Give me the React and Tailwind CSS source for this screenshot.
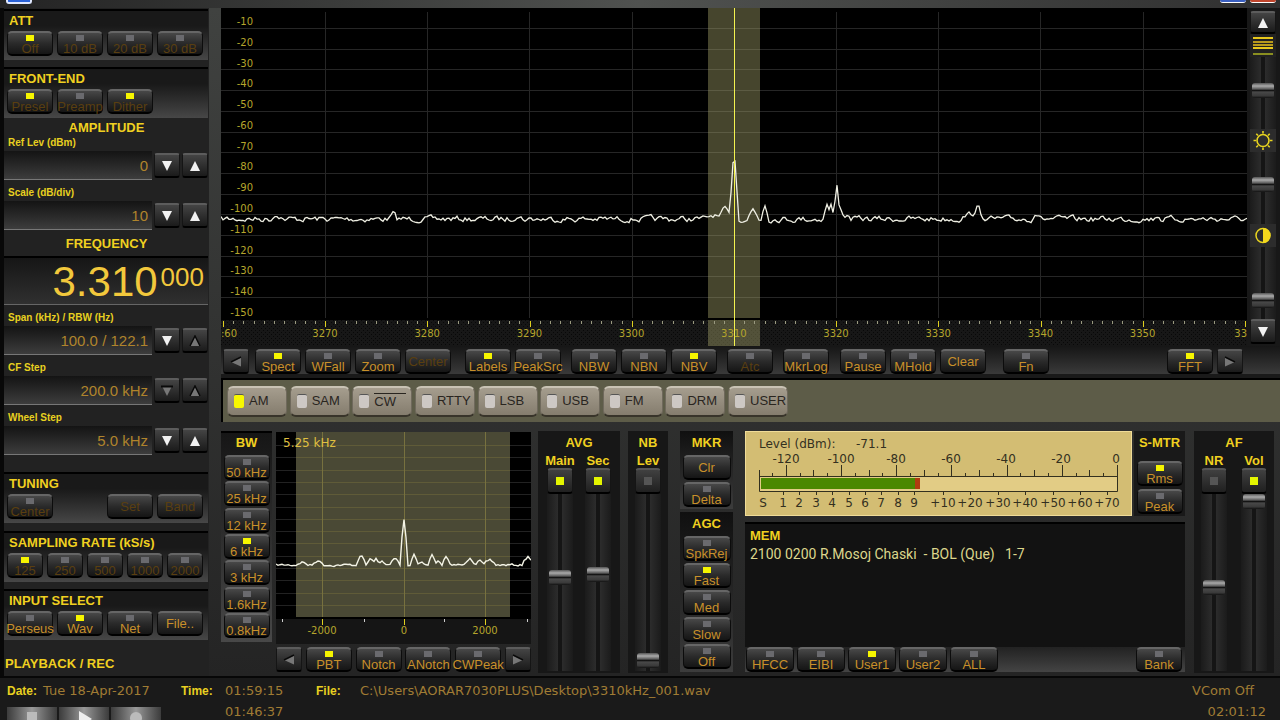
import React, { useState } from 'react';

const AXIS = [3270, 3280, 3290, 3300, 3310, 3320, 3330, 3340, 3350];
const LEVELS = [-10, -20, -30, -40, -50, -60, -70, -80, -90, -100, -110, -120, -130, -140, -150];
const MODES = ['AM', 'SAM', 'CW', 'RTTY', 'LSB', 'USB', 'FM', 'DRM', 'USER'];
const BANDWIDTHS = ['50 kHz', '25 kHz', '12 kHz', '6 kHz', '3 kHz', '1.6kHz', '0.8kHz'];

// [x, height above the noise floor, half width]
const MAIN_PEAKS = [
    [56, 5, 6], [172, 5, 4], [296, 4, 5], [492, 4, 8], [504, 10, 5], [512, 58, 3], [514, 60, 3],
    [532, 10, 5], [544, 15, 4], [606, 15, 4], [610, 13, 3], [616, 35, 3], [618, 14, 5], [624, 4, 5], [752, 6, 14],
    [757, 13, 4], [815, 7, 4], [936, 4, 4],
];
const SUB_PEAKS = [
    [26, 3, 6], [42, 5, 5], [85, 10, 5], [95, 7, 4], [100, 6, 3], [106, 5, 3], [119, 7, 5], [128, 46, 4],
    [138, 11, 4], [145, 4, 4], [156, 10, 4], [162, 5, 3], [170, 8, 4], [194, 8, 5], [203, 5, 4],
    [214, 5, 6], [252, 9, 6],
];

const makeTrace = (width, base, noise, step, peaks) => {
    let seed = 7;
    let drift = 0;
    let points = '';
    for (let x = 0; x <= width; x += step) {
        seed = (seed * 16807) % 2147483647;
        drift = drift * 0.5 + (seed / 2147483647 - 0.5) * noise;
        let lift = 0;
        peaks.forEach(([px, h, w]) => {
            const d = Math.abs(x - px);
            if (d < w) lift = Math.max(lift, h * (1 - (d / w) * 0.8));
        });
        points += `${x},${(base + drift - lift).toFixed(1)} `;
    }
    return points;
};

const Led = ({ on }) => (
    <span className={`block w-2 h-[6px] shrink-0 ${on ? 'bg-[#f6f500]' : 'bg-[#6a6a6e]'}`}></span>
);

const Key = ({ label, on, led = true, dim, width = 'w-[46px]', onClick }) => (
    <button
        type="button"
        onClick={onClick}
        className={`${width} h-[25px] shrink-0 flex flex-col items-center rounded-[5px] border-t-2 border-t-[#666] border-x border-x-[#0c0c0c] border-b-2 border-b-black bg-linear-to-b from-[#484848] via-[#2a2a2a] to-[#151515] text-[13px] leading-[14px] whitespace-nowrap ${led ? 'pt-[2px]' : 'justify-center'} ${dim ? 'text-[#5a3f10]' : 'text-[#c8902a]'}`}
    >
        {led && <Led on={on} />}
        <span className={led ? 'mt-px' : ''}>{label}</span>
    </button>
);

const Arrow = ({ dir, dim, label, size = 'w-[26px] h-[25px]' }) => (
    <button
        type="button"
        aria-label={label}
        className={`${size} shrink-0 flex items-center justify-center rounded-[3px] border-t-2 border-t-[#5c5c5c] border-x border-x-[#151515] border-b-2 border-b-black bg-linear-to-b from-[#444] to-[#1b1b1b]`}
    >
        <svg width="12" height="12" viewBox="0 0 12 12" fill={dim ? '#777' : '#f2f2f2'}>
            {dir === 'up' && <path d="M6 1 L11 11 H1 Z" />}
            {dir === 'down' && <path d="M1 1 H11 L6 11 Z" />}
            {dir === 'left' && <path d="M11 1.500 V10.500 L1 6 Z" />}
            {dir === 'right' && <path d="M1 1.500 V10.500 L11 6 Z" />}
            {dim && dir === 'up' && <path d="M1 11 L6 1 L11 11" fill="none" stroke="#0a0a0a" strokeWidth="1.500" />}
            {dim && dir === 'down' && <path d="M0 1.500 H12" fill="none" stroke="#0a0a0a" strokeWidth="2" />}
            {dim && dir === 'left' && <path d="M11 1 L1 6" fill="none" stroke="#0a0a0a" strokeWidth="1.500" />}
            {dim && dir === 'right' && <path d="M1 1 L11 6" fill="none" stroke="#0a0a0a" strokeWidth="1.500" />}
        </svg>
    </button>
);

const Slider = ({ label, value, height }) => (
    <input
        type="range"
        aria-label={label}
        defaultValue={value}
        className={`${height} w-[26px] m-0 shrink-0 appearance-none [writing-mode:vertical-lr] [direction:rtl] bg-[linear-gradient(90deg,#1b1b1b,#2c2c2c_42%,#151515_44%,#151515_56%,#2c2c2c_58%,#1b1b1b)] [&::-webkit-slider-thumb]:appearance-none [&::-webkit-slider-thumb]:w-[22px] [&::-webkit-slider-thumb]:h-[15px] [&::-webkit-slider-thumb]:rounded-[3px] [&::-webkit-slider-thumb]:bg-[linear-gradient(#555,#aaa_20%,#555_42%,#0a0a0a_48%,#484848_60%,#3a3a3a_85%,#111)]`}
    />
);

const Square = ({ on, label }) => (
    <button
        type="button"
        aria-label={label}
        className="w-[26px] h-[26px] shrink-0 flex items-center justify-center rounded-[4px] border-t-2 border-t-[#555] border-x border-x-[#151515] border-b-2 border-b-black bg-linear-to-b from-[#404040] to-[#202020]"
    >
        <span className={`block w-2 h-2 ${on ? 'bg-[#e4f500]' : 'bg-[#555]'}`}></span>
    </button>
);

const Heading = ({ children, className = '' }) => (
    <h2 className={`text-[13px] leading-4 font-bold text-[#f0d020] whitespace-nowrap ${className}`}>{children}</h2>
);

const Group = ({ title, children, className = '' }) => (
    <section className={`h-[51px] w-[204px] shrink-0 border-t-2 border-black bg-linear-to-b from-[#191919] from-30% to-[#474747] px-[3px] pt-[2px] ${className}`}>
        <Heading className="pl-[2px]">{title}</Heading>
        <div className="mt-[2px] flex gap-1">{children}</div>
    </section>
);

const Field = ({ id, label, value, dimDown, dimUp }) => (
    <div className="h-[50px] shrink-0">
        <label htmlFor={id} className="block pl-1 h-[14px] text-[10px] leading-[14px] font-bold text-[#e8d020]">{label}</label>
        <div className="mt-px flex items-center gap-[2px]">
            <input
                id={id}
                readOnly
                value={value}
                className="w-[148px] h-[29px] pr-1 text-right text-[15px] text-[#b0842c] border-b border-[#777] bg-linear-to-b from-[#141414] to-[#3d3d3d] outline-none"
            />
            <Arrow dir="down" dim={dimDown} label={`${label} down`} />
            <Arrow dir="up" dim={dimUp} label={`${label} up`} />
        </div>
    </div>
);

const Sidebar = () => (
    <aside className="w-[209px] shrink-0 flex flex-col border-l-4 border-[#080808] bg-[#222]">
        <Group title="ATT" className="mt-px">
            <Key label="Off" on dim />
            <Key label="10 dB" dim />
            <Key label="20 dB" dim />
            <Key label="30 dB" dim />
        </Group>
        <Group title="FRONT-END" className="mt-[7px]">
            <Key label="Presel" on dim />
            <Key label="Preamp" dim />
            <Key label="Dither" on dim />
        </Group>
        <Heading className="mt-[2px] text-center">AMPLITUDE</Heading>
        <Field id="ref" label="Ref Lev (dBm)" value="0" />
        <Field id="scale" label="Scale (dB/div)" value="10" />
        <Heading className="text-center">FREQUENCY</Heading>
        <div className="mt-1 mb-[6px] h-[49px] w-[204px] shrink-0 pr-1 flex items-start justify-end gap-[3px] border-t-2 border-black border-b border-b-[#666] bg-linear-to-b from-[#161616] to-[#303030] text-[#f2c83c]">
            <span className="pt-[2px] text-[42px] leading-[44px]">3.310</span>
            <span className="pt-1 text-[26px] leading-[30px]">000</span>
        </div>
        <Field id="span" label="Span (kHz) / RBW (Hz)" value="100.0 / 122.1" dimUp />
        <Field id="cf" label="CF Step" value="200.0 kHz" dimDown dimUp />
        <Field id="wheel" label="Wheel Step" value="5.0 kHz" />
        <Group title="TUNING" className="mt-[11px]">
            <Key label="Center" dim />
            <span className="w-[46px]"></span>
            <Key label="Set" led={false} dim />
            <Key label="Band" led={false} dim />
        </Group>
        <Group title="SAMPLING RATE (kS/s)" className="mt-2">
            <Key label="125" on dim width="w-9" />
            <Key label="250" dim width="w-9" />
            <Key label="500" dim width="w-9" />
            <Key label="1000" dim width="w-9" />
            <Key label="2000" dim width="w-9" />
        </Group>
        <Group title="INPUT SELECT" className="mt-[7px]">
            <Key label="Perseus" />
            <Key label="Wav" on />
            <Key label="Net" />
            <Key label="File.." led={false} />
        </Group>
        <Heading className="mt-4 pl-px">PLAYBACK / REC</Heading>
    </aside>
);

const Spectrum = () => (
    <div className="relative flex-1 min-w-0 h-[338px] overflow-hidden bg-black text-[10px] leading-3 text-[#b5a52c] font-['DejaVu_Sans',Verdana,sans-serif]">
        <svg className="block w-full h-full" viewBox="0 0 1026 338" preserveAspectRatio="none">
            <defs>
                <pattern id="dots" width="4" height="4" patternUnits="userSpaceOnUse">
                    <rect width="4" height="4" fill="#171717" />
                    <rect width="1" height="1" fill="#080808" />
                    <rect x="2" y="2" width="1" height="1" fill="#080808" />
                </pattern>
            </defs>
            <g stroke="#262626" strokeWidth="1">
                {LEVELS.map((l, i) => (
                    <line key={l} x1="0" x2="1026" y1={Math.round(20 + i * 20.7) + 0.5} y2={Math.round(20 + i * 20.7) + 0.5} />
                ))}
                {AXIS.map((f, i) => (
                    <line key={f} y1="4" y2="310" x1={Math.round(104 + i * 102.2) + 0.5} x2={Math.round(104 + i * 102.2) + 0.5} />
                ))}
            </g>
            <rect y="312" width="1026" height="26" fill="url(#dots)" />
            <rect x="487" width="52" height="338" fill="#a8a46c" opacity="0.42" />
            <rect y="310" width="1026" height="2" fill="#000" />
            {Array.from({ length: 101 }).map((_, i) => (
                <rect
                    key={i}
                    x={Math.round(2 + i * 10.22)}
                    y="313"
                    width="1"
                    height={i % 10 === 0 ? 6 : 3}
                    fill={i % 10 === 0 ? '#e0d020' : '#9a9a80'}
                />
            ))}
            <polyline points={makeTrace(1026, 211, 5, 2, MAIN_PEAKS)} fill="none" stroke="#f0f0e4" strokeWidth="1.300" />
            <rect x="513" width="1" height="338" fill="#f4f250" />
        </svg>
        <div className="absolute left-0 top-[8px] w-8 h-[303px] flex flex-col justify-between text-right">
            {LEVELS.map((l) => <span key={l}>{l}</span>)}
        </div>
        <span className="absolute left-0 top-[320px]">:60</span>
        {AXIS.map((f, i) => (
            <span key={f} className="absolute top-[320px] w-10 -ml-5 text-center" style={{ left: `${((104 + i * 102.2) / 1026) * 100}%` }}>{f}</span>
        ))}
        <span className="absolute right-0 top-[320px]">33</span>
    </div>
);

const DisplayStrip = () => (
    <div className="w-[33px] pt-[3px] pl-[3px] shrink-0 flex flex-col bg-[#181818]">
        <Arrow dir="up" label="Scroll up" size="w-[26px] h-[23px]" />
        <svg width="26" height="23" viewBox="0 0 26 23" fill="#e8c81c">
            <rect width="26" height="23" fill="#222" />
            <rect x="3" y="3" width="20" height="2" />
            <rect x="3" y="7" width="20" height="2" fill="#b89a1c" />
            <rect x="3" y="10" width="20" height="2" fill="#b89a1c" />
            <rect x="3" y="13" width="20" height="2" />
            <rect x="3" y="19" width="20" height="2" fill="#8a8f20" />
        </svg>
        <Slider label="Line spacing" value={54} height="h-[72px]" />
        <svg width="26" height="23" viewBox="0 0 26 23" fill="none" stroke="#e8d420" strokeWidth="1.600">
            <rect width="26" height="23" fill="#2c2c2c" stroke="none" />
            <circle cx="13" cy="11.500" r="6" />
            <path d="M13 2V4.500M13 18.500V21M3.500 11.500H6M20 11.500H22.500M6.300 4.800L8 6.500M18 16.500L19.700 18.200M6.300 18.200L8 16.500M18 6.500L19.700 4.800" />
        </svg>
        <Slider label="Brightness" value={57} height="h-[72px]" />
        <svg width="26" height="23" viewBox="0 0 26 23">
            <rect width="26" height="23" fill="#2c2c2c" />
            <circle cx="13" cy="11.500" r="7" fill="none" stroke="#e8d420" strokeWidth="1.500" />
            <path d="M13 4A7.500 7.500 0 0 1 13 19Z" fill="#f4d81c" />
        </svg>
        <Slider label="Contrast" value={20} height="h-[72px]" />
        <Arrow dir="down" label="Scroll down" />
    </div>
);

const Toolbar = () => (
    <div className="h-8 pt-[3px] pl-[2px] pr-[37px] flex items-start bg-linear-to-b from-[#161616] to-[#3a3a3a] border-b-4 border-[#1a1a1a]">
        <Arrow dir="left" dim label="Previous" />
        <div className="ml-[6px] flex gap-1">
            <Key label="Spect" on />
            <Key label="WFall" />
            <Key label="Zoom" />
            <Key label="Center" led={false} dim />
        </div>
        <div className="ml-[14px] flex gap-1">
            <Key label="Labels" on />
            <Key label="PeakSrc" />
        </div>
        <div className="ml-[10px] flex gap-1">
            <Key label="NBW" />
            <Key label="NBN" />
            <Key label="NBV" on />
        </div>
        <div className="ml-[10px] flex gap-[10px]">
            <Key label="Atc" dim />
            <Key label="MkrLog" />
        </div>
        <div className="ml-[11px] flex gap-1">
            <Key label="Pause" />
            <Key label="MHold" />
            <Key label="Clear" led={false} />
        </div>
        <div className="ml-[17px]">
            <Key label="Fn" />
        </div>
        <div className="ml-auto flex gap-1">
            <Key label="FFT" on />
            <Arrow dir="right" dim label="Next" />
        </div>
    </div>
);

const ModeBar = () => {
    const [mode, setMode] = useState('AM');

    return (
        <div className="h-[44px] pl-1 flex items-center border-t-2 border-l-2 border-black bg-[#5d5c48]">
            <div className="w-[561px] flex justify-between">
                {MODES.map((m) => (
                    <button
                        key={m}
                        type="button"
                        onClick={() => setMode(m)}
                        className="w-[60px] h-[31px] pl-[6px] flex items-center gap-[5px] rounded-[6px] border-t-2 border-t-[#c8c2b4] border-x border-x-[#6f695c] border-b-2 border-b-[#38342a] bg-linear-to-b from-[#a59d8e] to-[#857d6e] text-[13px] text-[#29251f]"
                    >
                        <span className={`w-[10px] h-[14px] shrink-0 rounded-[2px] border-t border-[#555] ${m === mode ? 'bg-[#f8f800]' : 'bg-[#cdc8c4]'}`}></span>
                        <span className={m === 'CW' ? 'w-8 border-t border-[#29251f] text-left leading-4' : 'leading-4'}>{m}</span>
                    </button>
                ))}
            </div>
        </div>
    );
};

const Passband = () => (
    <div className="w-[255px] shrink-0 flex flex-col">
        <div className="relative h-[212px] bg-[#151515] font-['DejaVu_Sans',Verdana,sans-serif] text-[10px] leading-3 text-[#b5a52c]">
            <svg width="255" height="212" viewBox="0 0 255 212" className="block">
                <rect width="255" height="185" fill="#000" />
                <rect x="20" width="214" height="185" fill="#4a4935" />
                {Array.from({ length: 14 }).map((_, i) => (
                    <g key={i}>
                        <rect y={Math.round(13 + i * 12.3)} width="255" height="1" fill="#222" />
                        <rect x="20" y={Math.round(13 + i * 12.3)} width="214" height="1" fill="#5f5b38" />
                    </g>
                ))}
                {[46, 128, 209].map((x) => (
                    <g key={x}>
                        <rect x={x} width="1" height="185" fill="#77713f" />
                        <rect x={x} y="187" width="1" height="6" fill="#e0d020" />
                    </g>
                ))}
                {[6, 88, 168, 251].map((x) => <rect key={x} x={x} y="187" width="1" height="3" fill="#ccc" />)}
                <rect y="185" width="255" height="2" fill="#000" />
                <polyline points={makeTrace(256, 133, 2, 2, SUB_PEAKS)} fill="none" stroke="#f4f4e6" strokeWidth="1.400" />
            </svg>
            <span className="absolute left-[7px] top-[3px] text-[12px] leading-4 text-[#e0c040]">5.25 kHz</span>
            <span className="absolute left-[26px] w-10 top-[193px] text-center">-2000</span>
            <span className="absolute left-[108px] w-10 top-[193px] text-center">0</span>
            <span className="absolute left-[189px] w-10 top-[193px] text-center">2000</span>
        </div>
        <div className="mt-[3px] flex justify-between">
            <Arrow dir="left" label="Previous filter" dim />
            <Key label="PBT" on />
            <Key label="Notch" />
            <Key label="ANotch" />
            <Key label="CWPeak" />
            <Arrow dir="right" label="Next filter" dim />
        </div>
    </div>
);

const Channel = ({ name, on, value }) => (
    <div className="w-[26px] flex flex-col items-center">
        <Heading>{name}</Heading>
        <div className="-mt-px">
            <Square on={on} label={name} />
        </div>
        <Slider label={`${name} level`} value={value} height="h-[177px]" />
    </div>
);

const Meter = () => (
    <div className="flex-1 h-[85px] bg-[#d3bd73] border border-[#f0dc98]">
        <svg width="385" height="83" viewBox="746 432 385 83" fontSize="12" fill="#33301f" fontFamily="'DejaVu Sans', Verdana, sans-serif">
            <text x="759" y="448">Level (dBm):</text>
            <text x="856" y="448">-71.1</text>
            {[-120, -100, -80, -60, -40, -20, 0].map((v, i) => (
                <text key={v} x={786 + i * 55} y="463" textAnchor="middle">{v}</text>
            ))}
            <rect x="759" y="476" width="358" height="15" fill="#e2cc85" />
            <rect x="761" y="478" width="154" height="11" fill="#4a8800" />
            <rect x="915" y="478" width="5" height="11" fill="#b03c10" />
            <path d="M759.500 470V491.500H1117.500V465M759.500 476.500H1117.500" fill="none" stroke="#33301f" />
            {Array.from({ length: 25 }).map((_, i) => (
                <rect
                    key={i}
                    x={Math.round(772 + i * 13.8)}
                    y={i % 4 === 1 ? 465 : i % 4 === 3 ? 470 : 473}
                    width="1"
                    height={i % 4 === 1 ? 11 : i % 4 === 3 ? 6 : 3}
                />
            ))}
            <text x="763" y="507" textAnchor="middle">S</text>
            {[1, 2, 3, 4, 5, 6, 7, 8, 9].map((n, i) => (
                <g key={n}>
                    <text x={Math.round(783 + i * 16.4)} y="507" textAnchor="middle">{n}</text>
                    <rect x={Math.round(783 + i * 16.4)} y="492" width="1" height="3" />
                </g>
            ))}
            {[10, 20, 30, 40, 50, 60, 70].map((n, i) => (
                <g key={n}>
                    <text x={Math.round(943 + i * 27.4)} y="507" textAnchor="middle">+{n}</text>
                    <rect x={Math.round(943 + i * 27.4)} y="492" width="1" height="3" />
                </g>
            ))}
        </svg>
    </div>
);

const Memory = () => (
    <div className="ml-3 flex-1 min-w-0 flex flex-col">
        <div className="flex gap-[2px]">
            <Meter />
            <div className="w-[51px] shrink-0 flex flex-col items-center gap-[3px] bg-[#191919]">
                <Heading className="mt-1 mb-[7px]">S-MTR</Heading>
                <Key label="Rms" on />
                <Key label="Peak" />
            </div>
        </div>
        <div className="mt-[6px] h-[125px] pl-[5px] pt-1 bg-[#121212] border-t-2 border-black">
            <Heading>MEM</Heading>
            <p className="text-[14px] leading-5 text-[#dcd68c] whitespace-pre font-[Roboto,sans-serif]">2100 0200 R.Mosoj Chaski  - BOL (Que)   1-7</p>
        </div>
        <div className="pl-px pr-[3px] flex gap-[3px] bg-linear-to-b from-[#222] to-[#444]">
            <Key label="HFCC" width="w-12" />
            <Key label="EIBI" width="w-12" />
            <Key label="User1" on width="w-12" />
            <Key label="User2" width="w-12" />
            <Key label="ALL" width="w-12" />
            <div className="ml-auto">
                <Key label="Bank" />
            </div>
        </div>
    </div>
);

const Panels = () => (
    <div className="mt-[9px] h-[242px] flex items-start pr-[6px]">
        <section className="w-[51px] h-[211px] shrink-0 flex flex-col items-center border-t-2 border-black bg-linear-to-b from-[#161616] to-[#484848]">
            <Heading className="mt-[2px]">BW</Heading>
            <div className="mt-1 h-[183px] flex flex-col justify-between">
                {BANDWIDTHS.map((b) => <Key key={b} label={b} on={b === '6 kHz'} />)}
            </div>
        </section>
        <div className="ml-1 mt-px">
            <Passband />
        </div>
        <section className="ml-[7px] w-[82px] h-full shrink-0 pt-1 bg-[#171717]">
            <Heading className="text-center">AVG</Heading>
            <div className="mt-[2px] flex justify-center gap-3">
                <Channel name="Main" on value={53} />
                <Channel name="Sec" on value={55} />
            </div>
        </section>
        <section className="ml-2 w-[40px] h-full shrink-0 pt-1 flex flex-col items-center bg-[#171717]">
            <Heading>NB</Heading>
            <div className="mt-[2px]">
                <Channel name="Lev" value={2} />
            </div>
        </section>
        <div className="ml-3 w-[53px] shrink-0">
            <section className="h-[78px] pt-1 flex flex-col items-center gap-[2px] bg-linear-to-b from-[#101010] to-[#3c3c3c]">
                <Heading className="mb-[2px]">MKR</Heading>
                <Key label="Clr" led={false} width="w-12" />
                <Key label="Delta" width="w-12" />
            </section>
            <section className="mt-[3px] h-[160px] pt-1 flex flex-col items-center gap-[2px] bg-linear-to-b from-[#101010] to-[#3c3c3c]">
                <Heading className="mb-[2px]">AGC</Heading>
                <Key label="SpkRej" width="w-12" />
                <Key label="Fast" on width="w-12" />
                <Key label="Med" width="w-12" />
                <Key label="Slow" width="w-12" />
                <Key label="Off" width="w-12" />
            </section>
        </div>
        <Memory />
        <section className="ml-[9px] w-[80px] h-full shrink-0 pt-1 bg-[#171717]">
            <Heading className="text-center">AF</Heading>
            <div className="mt-[2px] flex justify-center gap-[14px]">
                <Channel name="NR" value={47} />
                <Channel name="Vol" on value={100} />
            </div>
        </section>
    </div>
);

const Transport = ({ label, children }) => (
    <button type="button" aria-label={label} className="w-[50px] h-7 flex justify-center pt-1 bg-linear-to-r from-[#3c3c3c] via-[#999] to-[#3c3c3c]">
        <svg width="24" height="20" viewBox="0 0 24 20" fill="#eee">{children}</svg>
    </button>
);

const StatusBar = () => (
    <footer className="h-[44px] shrink-0 pl-[7px] pr-[14px] border-t-2 border-[#070707] bg-[#1a1a1a] flex justify-between text-[13px] text-[#a07c34] font-['DejaVu_Sans',Verdana,sans-serif]">
        <div className="grid grid-cols-[36px_138px_44px_91px_44px_auto] auto-rows-min pt-[5px] leading-4">
            <b className="text-[12px] text-[#e8d020] font-['Liberation_Sans',Arial,sans-serif]">Date:</b>
            <span>Tue 18-Apr-2017</span>
            <b className="text-[12px] text-[#e8d020] font-['Liberation_Sans',Arial,sans-serif]">Time:</b>
            <span>01:59:15</span>
            <b className="text-[12px] text-[#e8d020] font-['Liberation_Sans',Arial,sans-serif]">File:</b>
            <span>C:\Users\AORAR7030PLUS\Desktop\3310kHz_001.wav</span>
            <div className="col-span-3 mt-2 flex gap-[2px]">
                <Transport label="Stop"><rect x="7" y="1" width="10" height="10" fill="#bbb" /></Transport>
                <Transport label="Play"><path d="M7 0L20 8L7 16Z" /></Transport>
                <Transport label="Record"><circle cx="12" cy="7" r="6" fill="#bbb" /></Transport>
            </div>
            <span className="mt-[5px]">01:46:37</span>
        </div>
        <div className="pt-[5px] flex flex-col gap-[5px] leading-4 text-right">
            <span className="pr-3">VCom Off</span>
            <span>02:01:12</span>
        </div>
    </footer>
);

const App = () => (
    <div className="h-screen overflow-hidden flex flex-col bg-[#222] font-['Liberation_Sans',Arial,sans-serif]">
        <header className="h-2 shrink-0 flex items-start justify-between pl-[6px] pr-1 bg-linear-to-r from-[#242424] via-[#505250] to-[#303030]">
            <span className="w-[26px] h-1 rounded-b-[3px] border-2 border-t-0 border-[#dfe8ff] bg-[#2a62d8]"></span>
            <div className="flex gap-1">
                <button type="button" aria-label="Minimize" className="w-[26px] h-[3px] rounded-b-[3px] border-b border-white bg-[#3a5fc0]"></button>
                <button type="button" aria-label="Close" className="w-[26px] h-[3px] rounded-b-[3px] border-b border-white bg-[#c0452c]"></button>
            </div>
        </header>
        <div className="flex-1 min-h-0 flex">
            <Sidebar />
            <main className="flex-1 min-w-0 pl-3 bg-linear-to-b from-[#404240] to-[#242424]">
                <div className="flex">
                    <Spectrum />
                    <DisplayStrip />
                </div>
                <Toolbar />
                <ModeBar />
                <Panels />
            </main>
        </div>
        <StatusBar />
    </div>
);

export default App;
